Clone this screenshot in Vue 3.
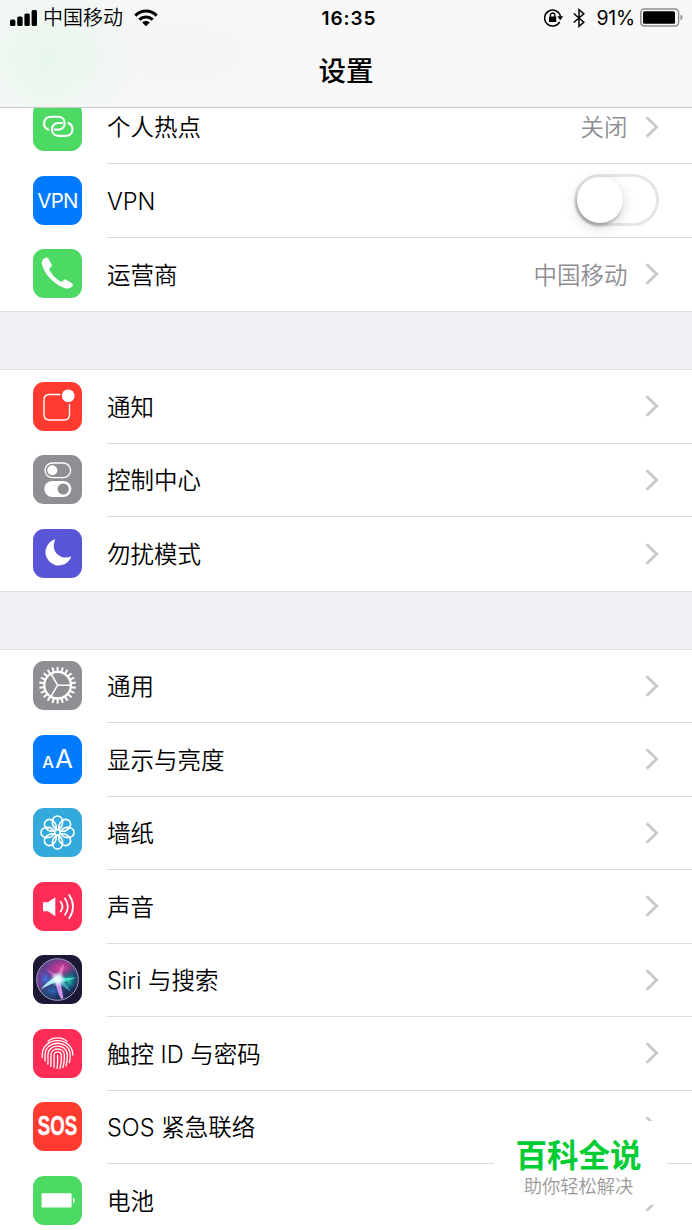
<script setup>
const groups = [
  [
    { icon: 'hotspot', label: '个人热点', color: '#4cd964', value: '关闭' },
    { icon: 'vpn', label: 'VPN', color: '#007aff', toggle: true },
    { icon: 'phone', label: '运营商', color: '#4cd964', value: '中国移动' },
  ],
  [
    { icon: 'notice', label: '通知', color: '#ff3b30' },
    { icon: 'control', label: '控制中心', color: '#8e8e93' },
    { icon: 'moon', label: '勿扰模式', color: '#5856d6' },
  ],
  [
    { icon: 'gear', label: '通用', color: '#8e8e93' },
    { icon: 'display', label: '显示与亮度', color: '#007aff' },
    { icon: 'flower', label: '墙纸', color: '#34aadc' },
    { icon: 'sound', label: '声音', color: '#ff2d55' },
    { icon: 'siri', label: 'Siri 与搜索', color: '#1c1836' },
    { icon: 'touch', label: '触控 ID 与密码', color: '#ff2d55' },
    { icon: 'sos', label: 'SOS 紧急联络', color: '#ff3b30' },
    { icon: 'battery', label: '电池', color: '#4cd964' },
  ],
]
</script>

<template>
  <div class="screen">
    <header class="header">
      <div class="status">
        <div class="status-left">
          <svg class="signal" width="28" height="18" viewBox="0 0 28 18">
            <rect x="0" y="10.5" width="5.4" height="6.5" rx="1.5" />
            <rect x="7.2" y="7.5" width="5.4" height="9.5" rx="1.5" />
            <rect x="14.4" y="4.5" width="5.4" height="12.5" rx="1.5" />
            <rect x="21.6" y="1" width="5.4" height="16" rx="1.5" />
          </svg>
          <span class="carrier">中国移动</span>
          <svg class="wifi" width="24" height="18" viewBox="0 0 24 18">
            <g fill="none" stroke="#000" stroke-width="3">
              <path d="M1.3 6.6C7.5 .6 16.5 .6 22.7 6.6" />
              <path d="M5.3 10.7C9.2 7.1 14.8 7.1 18.7 10.7" />
            </g>
            <path d="M8.2 13.5C10.4 11.5 13.6 11.5 15.8 13.5L12 17.3Z" />
          </svg>
        </div>
        <span class="time">16:35</span>
        <div class="status-right">
          <svg width="20" height="18" viewBox="0 0 20 18">
            <path d="M15.7 12.8A8 8 0 1 1 16.5 7.6" fill="none" stroke="#000" stroke-width="1.5" />
            <path d="M13.3 7.3H19.2L16.3 11.2Z" />
            <rect x="5" y="7.5" width="7.2" height="5.6" rx=".7" />
            <path d="M6.4 8V6.2a2.2 2.2 0 0 1 4.4 0V8" fill="none" stroke="#000" stroke-width="1.3" />
          </svg>
          <svg width="14" height="20" viewBox="0 0 14 20">
            <path d="M1.8 5.5 11.8 14.3 7 18.3V1.7L11.8 5.7 1.8 14.5" fill="none" stroke="#000" stroke-width="1.5" />
          </svg>
          <span class="percent">91%</span>
          <svg width="44" height="20" viewBox="0 0 44 20">
            <rect x=".8" y="1" width="37.8" height="17" rx="3.5" fill="none" stroke="#8e8e90" stroke-width="1.5" />
            <rect x="3" y="3.3" width="32" height="12.4" rx="1.5" />
            <path d="M40.5 6.6Q42.6 7.6 42.6 9.6T40.5 12.6Z" fill="#8e8e90" />
          </svg>
        </div>
      </div>
      <h1 class="title">设置</h1>
    </header>

    <main class="list">
      <section v-for="(group, g) in groups" :key="g" class="group">
        <div v-for="item in group" :key="item.icon" class="row">
          <div class="icon" :style="{ background: item.color }">
            <span v-if="item.icon === 'vpn'" class="glyph-vpn">VPN</span>
            <span v-else-if="item.icon === 'sos'" class="glyph-sos">SOS</span>
            <span v-else-if="item.icon === 'display'" class="glyph-aa"><small>A</small>A</span>
            <svg v-else viewBox="0 0 49 49" width="49" height="49" fill="none" stroke="#fff">
              <g v-if="item.icon === 'hotspot'" stroke-width="2.1" stroke-linecap="round">
                <path d="M15.2 27.6C8.8 24.5 9.9 14.7 18.3 14.7H25C33.8 14.7 33.8 27.6 25.3 27.6H21.7" />
                <path d="M35.4 21C41.8 24.1 40.7 33.9 32.3 33.9H25.6C16.8 33.9 16.8 21 25.3 21H28.9" />
              </g>

              <path
                v-else-if="item.icon === 'phone'"
                fill="#fff"
                stroke="none"
                d="M12.4 8.8C14.2 8.1 15 9 15.8 10.4L18.5 15.2C19.3 16.7 18.6 17.6 17.4 18.5C16.2 19.4 16 20.3 16.8 21.7C19.3 26 22.7 29.6 27 32.2C28.3 33 29.2 32.8 30.2 31.7C31.3 30.5 32.2 30.2 33.6 31L38.2 33.7C39.7 34.5 40.4 35.4 39.6 36.8C38 39.6 34.8 40.2 31.3 38.9C20.7 34.8 12.2 26.2 9.2 16.2C8.2 12.8 9.4 10 12.4 8.8Z"
              />

              <g v-else-if="item.icon === 'notice'" stroke-width="1.4">
                <path d="M27.4 12.5H16.5Q11 12.5 11 18V32.5Q11 38 16.5 38H31Q36.5 38 36.5 32.5V22" />
                <circle cx="35.2" cy="13.8" r="6.4" fill="#fff" stroke="none" />
              </g>

              <g v-else-if="item.icon === 'control'" stroke-width="1.4">
                <rect x="12" y="8" width="25.6" height="14.6" rx="7.3" />
                <circle cx="19.3" cy="15.2" r="5" fill="#fff" stroke="none" />
                <rect x="11.3" y="26" width="27" height="16" rx="8" fill="#fff" stroke="none" />
                <circle cx="30.2" cy="34" r="5.6" fill="#8e8e93" stroke="none" />
              </g>

              <path
                v-else-if="item.icon === 'moon'"
                fill="#fff"
                stroke="none"
                d="M22.3 10.3A13.3 13.3 0 1 0 38.4 27.2C28.5 32.2 16.6 23 22.3 10.3Z"
              />

              <g v-else-if="item.icon === 'gear'">
                <circle cx="24.6" cy="24.2" r="13.3" stroke-width="2.3" />
                <path
                  v-for="n in 22"
                  :key="n"
                  d="M24.6 10.6V5.8"
                  stroke-width="2"
                  :transform="`rotate(${(n * 360) / 22} 24.6 24.2)`"
                />
                <path d="M24.6 24.2H37.5M24.6 24.2 18.1 13M24.6 24.2 18.1 35.4" stroke-width="1.5" />
              </g>

              <g v-else-if="item.icon === 'flower'" stroke-width="1.6">
                <path
                  v-for="n in 8"
                  :key="n"
                  d="M24.5 22C20.2 19.8 19.1 16.4 19.5 13A5 5 0 0 1 29.5 13C29.9 16.4 28.8 19.8 24.5 22Z"
                  :transform="`rotate(${n * 45} 24.5 24.5)`"
                />
              </g>

              <g v-else-if="item.icon === 'sound'" stroke-width="1.8" stroke-linecap="round">
                <path d="M10 20.2H15L22.3 15.2V34.2L15 29.2H10Z" fill="#fff" stroke="none" />
                <path d="M27.7 19.8Q31.2 24.6 27.7 29.5M32 16.4Q37.6 24.6 32 32.8M36.2 13Q43.8 24.6 36.2 36.2" />
              </g>

              <g v-else-if="item.icon === 'siri'" stroke="none">
                <defs>
                  <linearGradient id="siri-orb" x1="0" y1="0" x2=".7" y2="1">
                    <stop offset="0" stop-color="#35508e" />
                    <stop offset=".4" stop-color="#91398f" />
                    <stop offset=".65" stop-color="#214b70" />
                    <stop offset="1" stop-color="#1b1f4a" />
                  </linearGradient>
                  <radialGradient id="siri-pink">
                    <stop offset="0" stop-color="#e0459f" />
                    <stop offset="1" stop-color="#b32c80" stop-opacity="0" />
                  </radialGradient>
                  <radialGradient id="siri-teal">
                    <stop offset="0" stop-color="#22c5b0" />
                    <stop offset="1" stop-color="#0d5c84" stop-opacity="0" />
                  </radialGradient>
                  <radialGradient id="siri-blue">
                    <stop offset="0" stop-color="#3a7be0" />
                    <stop offset="1" stop-color="#2a3f9c" stop-opacity="0" />
                  </radialGradient>
                  <radialGradient id="siri-glow">
                    <stop offset="0" stop-color="#fff" />
                    <stop offset=".4" stop-color="#e6faff" stop-opacity=".9" />
                    <stop offset="1" stop-color="#bfeaff" stop-opacity="0" />
                  </radialGradient>
                </defs>
                <circle cx="24.5" cy="24.5" r="20.5" fill="url(#siri-orb)" />
                <ellipse cx="28" cy="13.5" rx="15" ry="10" fill="url(#siri-pink)" />
                <ellipse cx="36" cy="26" rx="9" ry="11" fill="url(#siri-teal)" />
                <ellipse cx="12.5" cy="24" rx="9" ry="11" fill="url(#siri-blue)" />
                <ellipse cx="20" cy="36" rx="11" ry="8" fill="url(#siri-blue)" opacity=".7" />
                <path d="M13 14.5Q20 16 28 23L23 27Q19 19 13 14.5Z" fill="#c565cf" opacity=".75" />
                <path d="M31 9Q30.5 16 28 24L23 23Q26 14 31 9Z" fill="#e283c2" opacity=".75" />
                <path d="M43 22.5Q34 27 26 27.5L25 22Q34 23.5 43 22.5Z" fill="#45dcc0" />
                <path d="M8 34.5Q14 26 23 21.5L27 26Q17 28.5 8 34.5Z" fill="#aaf0f3" />
                <path d="M28 44Q23 34 22.5 25L27.5 24Q28.5 34 30.5 43Z" fill="#d092e8" />
                <path d="M38 36.5Q29 31 23.5 26L28 22.5Q33 29 38 36.5Z" fill="#4cb0c8" opacity=".8" />
                <circle cx="25" cy="24.3" r="8" fill="url(#siri-glow)" />
                <circle cx="24.5" cy="24.5" r="20.8" fill="none" stroke="#a9a5c8" stroke-width="1" />
              </g>

              <g v-else-if="item.icon === 'touch'" stroke-width="1.3" stroke-linecap="round">
                <path d="M15 12.2C20.5 7.8 28.5 7.8 34 12.2" />
                <path d="M9.2 28.5V26C9.3 6.8 39.6 6.8 39.8 26" />
                <path d="M12 32C12.2 30 11.9 27.7 12 25.5C12.6 10.5 36.6 10.5 37.1 25.5C37.2 28.5 37 31 36.4 33.5" />
                <path d="M14.8 35.2C15.3 32 14.8 28.7 14.9 25.8C15.4 14.2 33.8 14.2 34.3 25.8C34.4 30 34 33.4 33 36.8" />
                <path d="M17.8 37.4C18.4 33.5 17.8 29.5 17.9 26C18.3 18 31 18 31.4 26C31.6 30.7 31 35 29.9 38.6" />
                <path d="M20.9 38.7C21.6 34.5 20.9 30.2 21 26.6C21.3 21.7 28.2 21.7 28.4 26.6C28.6 31.3 28.1 35 27 39.4" />
                <path d="M24.1 39.4C24.9 35 24.6 31 24.6 26.5" />
              </g>

              <g v-else-if="item.icon === 'battery'" fill="#fff" stroke="none">
                <rect x="8.6" y="17.2" width="30" height="14.4" rx=".8" />
                <path d="M40 21.3Q41.6 22 41.6 24.4T40 27.5Z" />
              </g>
            </svg>
          </div>
          <div class="body">
            <span class="label">{{ item.label }}</span>
            <span v-if="item.value" class="value">{{ item.value }}</span>
            <span v-if="item.toggle" class="toggle"><i class="knob"></i></span>
            <svg v-else class="chevron" width="14" height="22" viewBox="0 0 14 22">
              <path d="M1.6 1.3 11.6 11 1.6 20.7" fill="none" stroke="#c7c7cc" stroke-width="2.7" />
            </svg>
          </div>
        </div>
      </section>
    </main>

    <div class="watermark">
      <strong>百科全说</strong>
      <span>助你轻松解决</span>
    </div>
  </div>
</template>

<style>
body {
  overflow: hidden;
  background: #efeff4;
}
</style>

<style scoped>
.screen {
  position: relative;
  width: 692px;
  height: 1230px;
  overflow: hidden;
  background: #efeff4;
  color: #000;
  font-family: Inter, "Noto Sans CJK SC", sans-serif;
}

.header {
  position: relative;
  z-index: 1;
  box-sizing: border-box;
  height: 108px;
  border-bottom: 1px solid #c9c9cb;
  background:
    radial-gradient(ellipse 100px 100px at 48px 58px, #e8f6ec, transparent),
    radial-gradient(ellipse 130px 60px at 180px 52px, #f4f4f4, transparent),
    #f8f8f8;
}

.status {
  display: grid;
  grid-template-columns: 1fr auto 1fr;
  align-items: center;
  height: 35px;
  padding: 0 8px 0 10px;
}

.status-left,
.status-right {
  display: flex;
  align-items: center;
}

.status-left svg,
.status-right svg {
  margin-bottom: 1px;
}

.status-right {
  justify-content: flex-end;
}

.carrier {
  margin: 1px 11px 0 5px;
  font-size: 20px;
  font-weight: 350;
  line-height: 35px;
}

.time {
  padding-left: 4px;
  font-size: 19px;
  font-weight: 600;
  letter-spacing: 0.9px;
}

.status-right svg:nth-child(2) {
  margin-right: 10px;
  margin-left: 8px;
}

.percent {
  margin-right: 5px;
  font-size: 19.5px;
  letter-spacing: -0.2px;
}

.title {
  margin: 0;
  font-size: 27.5px;
  font-weight: 500;
  line-height: 72px;
  text-align: center;
}

.list {
  display: flex;
  flex-direction: column;
  gap: 59px;
  margin-top: -17.5px;
}

.group {
  background: #fff;
  box-shadow: 0 -1px #dcdce0, 0 1px #dcdce0;
}

.row {
  display: flex;
  align-items: center;
  height: 73.5px;
  padding-left: 33px;
}

.icon {
  display: flex;
  flex: none;
  align-items: center;
  justify-content: center;
  width: 49px;
  height: 49px;
  margin: 0 25px 1.4px 0;
  border-radius: 11px;
  color: #fff;
}

.glyph-vpn {
  font-size: 20.5px;
  letter-spacing: -0.7px;
}

.glyph-sos {
  font: bold 27px "Liberation Sans Narrow", "Liberation Sans", sans-serif;
  transform: scaleX(0.69);
  -webkit-text-stroke: 0.4px #fff;
}

.glyph-aa {
  padding-bottom: 1px;
  font-size: 26px;
  line-height: 1;
}

.glyph-aa small {
  margin-right: 1px;
  font-size: 16.5px;
  font-weight: 500;
}

.body {
  display: flex;
  flex: 1;
  align-items: center;
  box-sizing: border-box;
  height: 100%;
  padding-right: 33px;
  border-bottom: 1px solid #dcdce0;
}

.row:last-child .body {
  border-bottom: 0;
}

.label,
.value {
  padding-top: 3px;
  font-size: 23.5px;
  font-weight: 350;
  line-height: 34px;
}

.label {
  flex: 1;
}

.value {
  margin-right: 17.5px;
  color: #8e8e93;
}

.toggle {
  box-sizing: border-box;
  width: 85px;
  height: 52px;
  border: 3px solid #e5e5e5;
  border-radius: 26px;
}

.knob {
  display: block;
  width: 46px;
  height: 46px;
  border-radius: 50%;
  background: #fff;
  box-shadow: -1px 3px 3px rgba(0, 0, 0, 0.22), 0 4px 14px rgba(0, 0, 0, 0.16);
}

.watermark {
  position: absolute;
  left: 494px;
  top: 1121px;
  z-index: 2;
  display: flex;
  flex-direction: column;
  align-items: center;
  box-sizing: border-box;
  width: 173px;
  height: 84px;
  padding: 15px 4px 0 0;
  background: #fff;
}

.watermark strong {
  color: #0c3;
  font-size: 31.5px;
  font-weight: 700;
  line-height: 40px;
}

.watermark span {
  color: #999;
  font-size: 18.3px;
  font-weight: 350;
  line-height: 21px;
}
</style>
